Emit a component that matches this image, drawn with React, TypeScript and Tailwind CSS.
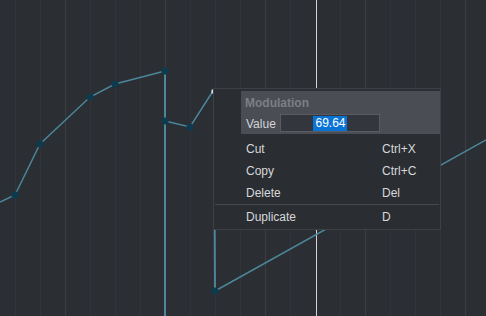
import React from 'react'

const minor = [15.5, 40.5, 90.5, 115.5, 140.5, 190.5, 215.5, 240.5, 290.5, 340.5, 390.5, 415.5, 440.5]
const major = [65.5, 165.5, 265.5, 365.5, 465.5]

const points: [number, number][] = [
  [15, 195],
  [40, 144],
  [90, 97],
  [115, 84],
  [165, 71],
  [165, 121],
  [190, 127],
  [215, 291],
]

const items = [
  { label: 'Cut', key: 'Ctrl+X' },
  { label: 'Copy', key: 'Ctrl+C' },
  { label: 'Delete', key: 'Del' },
]

const Canvas: React.FC = () => (
  <svg width="486" height="316" className="block">
    <rect width="486" height="316" fill="#2b2e33" />
    {minor.map((x) => (
      <line key={x} x1={x} y1={0} x2={x} y2={316} stroke="#31343a" strokeWidth={1} />
    ))}
    {major.map((x) => (
      <line key={x} x1={x} y1={0} x2={x} y2={316} stroke="#3b3e44" strokeWidth={1} />
    ))}
    <line x1={316.5} y1={0} x2={316.5} y2={316} stroke="#d4d4d4" strokeWidth={1} />
    <g stroke="#4b8699" fill="none" strokeWidth={1.5}>
      <polyline points="0,202 15,195 40,144 90,97 115,84 165,71" />
      <line x1={165} y1={71} x2={165} y2={316} strokeWidth={2} />
      <polyline points="165,121 190,127 213,91" />
      <line x1={214} y1={91} x2={215} y2={291} strokeWidth={2} />
      <line x1={215} y1={291} x2={486} y2={140} />
    </g>
    {points.map(([x, y]) => (
      <circle key={`${x}-${y}`} cx={x} cy={y} r={3.6} fill="#0e3a4d" />
    ))}
    <rect x={211.5} y={89.5} width={3} height={4} fill="#cfeaf2" />
  </svg>
)

const ContextMenu: React.FC = () => (
  <div className="absolute left-[213px] top-[88px] w-[228px] h-[142px] bg-[#2a2d31] border border-[#3d4045] text-[12px] text-[#d6d8db] font-['Liberation_Sans',Arial,sans-serif]">
    <div className="ml-[27px] mt-[2px] h-[43px] bg-[#4a4d54] pl-[4px] pt-[5px]">
      <div className="font-bold text-[#7c7f85] leading-[14px]">Modulation</div>
      <div className="flex items-center mt-[3px]">
        <span className="w-[35px] pl-[1px] pt-[2px] text-[#d2d4d7]">Value</span>
        <div className="w-[100px] h-[18px] bg-[#33363c] border border-[#595c62] flex items-center justify-center pt-px">
          <span className="bg-[#0a73d6] text-white leading-[15px] pl-[2px] pr-px">69.64</span>
        </div>
      </div>
    </div>
    <div className="mt-[4px]">
      {items.map((it) => (
        <div key={it.label} className="flex items-center h-[22px]">
          <span className="pl-[32px] w-[168px]">{it.label}</span>
          <span>{it.key}</span>
        </div>
      ))}
    </div>
    <div className="mx-[1px] h-px bg-[#45484d]" />
    <div className="flex items-center h-[24px]">
      <span className="pl-[32px] w-[168px]">Duplicate</span>
      <span>D</span>
    </div>
  </div>
)

const App: React.FC = () => {
  return (
    <div className="relative w-[486px] h-[316px] overflow-hidden bg-[#2b2e33]">
      <Canvas />
      <ContextMenu />
    </div>
  )
}

export default App
